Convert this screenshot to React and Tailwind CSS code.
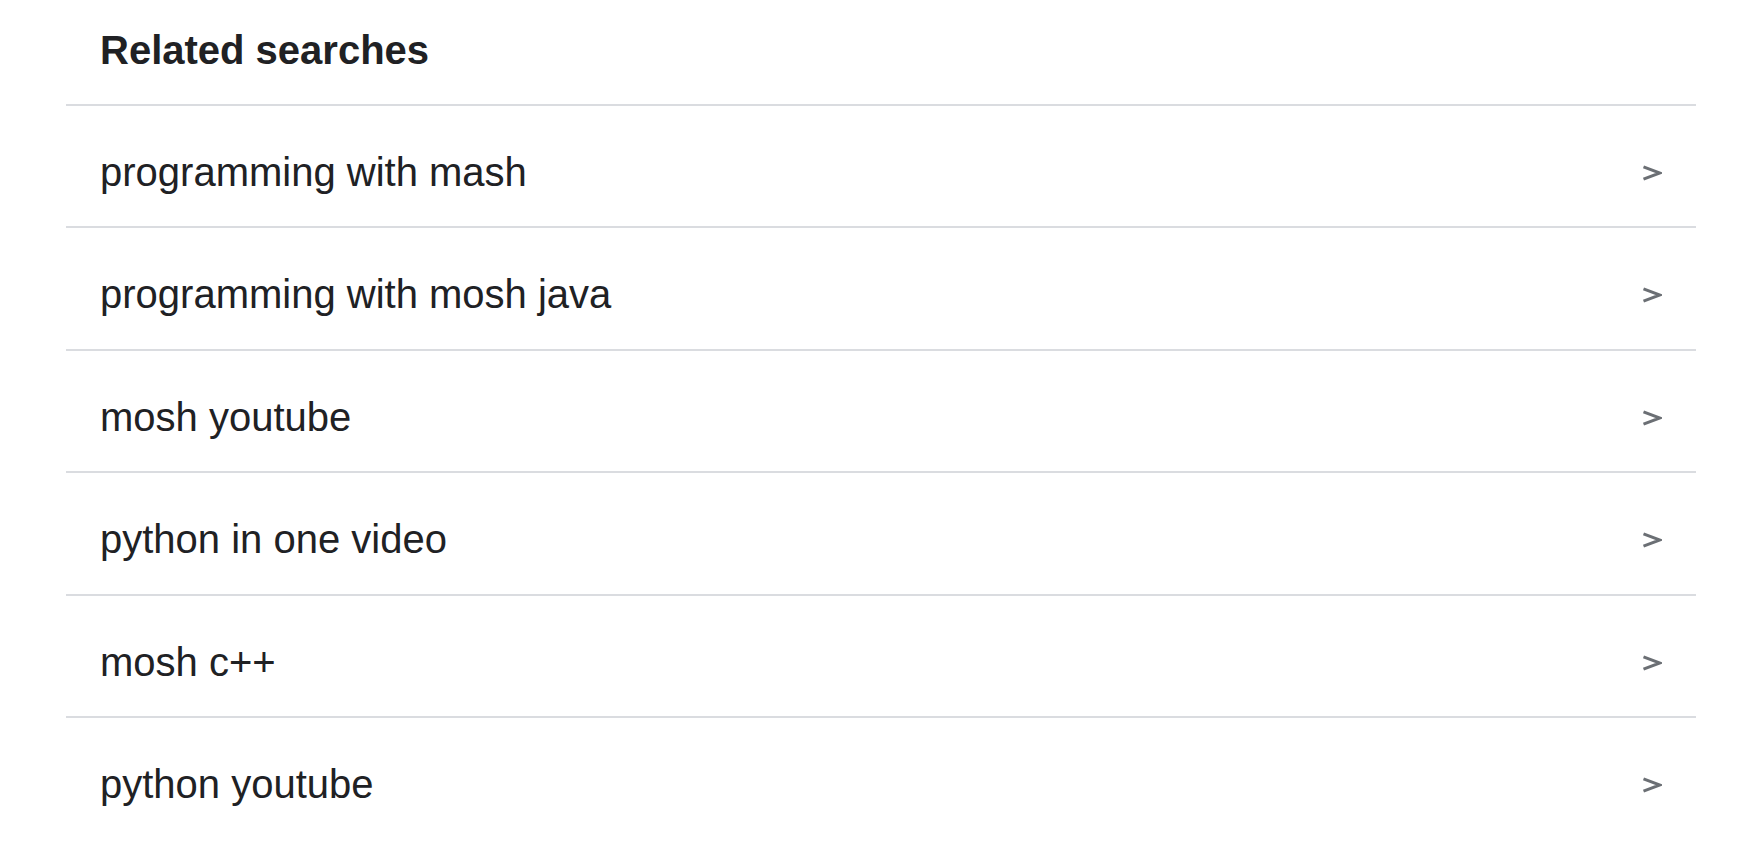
const searches = [
  "programming with mash",
  "programming with mosh java",
  "mosh youtube",
  "python in one video",
  "mosh c++",
  "python youtube",
];

function Chevron() {
  return (
    <svg width="20" height="16" viewBox="0 0 20 16" fill="none" className="mt-[59px] shrink-0">
      <path d="M1.5 1.8 L18 8 L1.5 14.2" stroke="#6b6f74" strokeWidth="3" strokeLinejoin="miter" />
    </svg>
  );
}

export default function App() {
  return (
    <div className="min-h-[868px] w-full bg-white text-[#202124] font-['Liberation_Sans',Arial,sans-serif]">
      <div className="mx-[66px] w-[1630px]">
        <div className="h-[104px] pl-[34px] pt-[26px]">
          <h2 className="text-[40px] font-bold leading-[48px]">Related searches</h2>
        </div>
        {searches.map((item) => (
          <a
            key={item}
            href="#"
            className="flex h-[122.4px] items-start justify-between border-t-2 border-[#dadce0] pl-[34px] pr-[34px]"
          >
            <span className="pt-[42px] text-[40px] leading-[48px]">{item}</span>
            <Chevron />
          </a>
        ))}
      </div>
    </div>
  );
}
